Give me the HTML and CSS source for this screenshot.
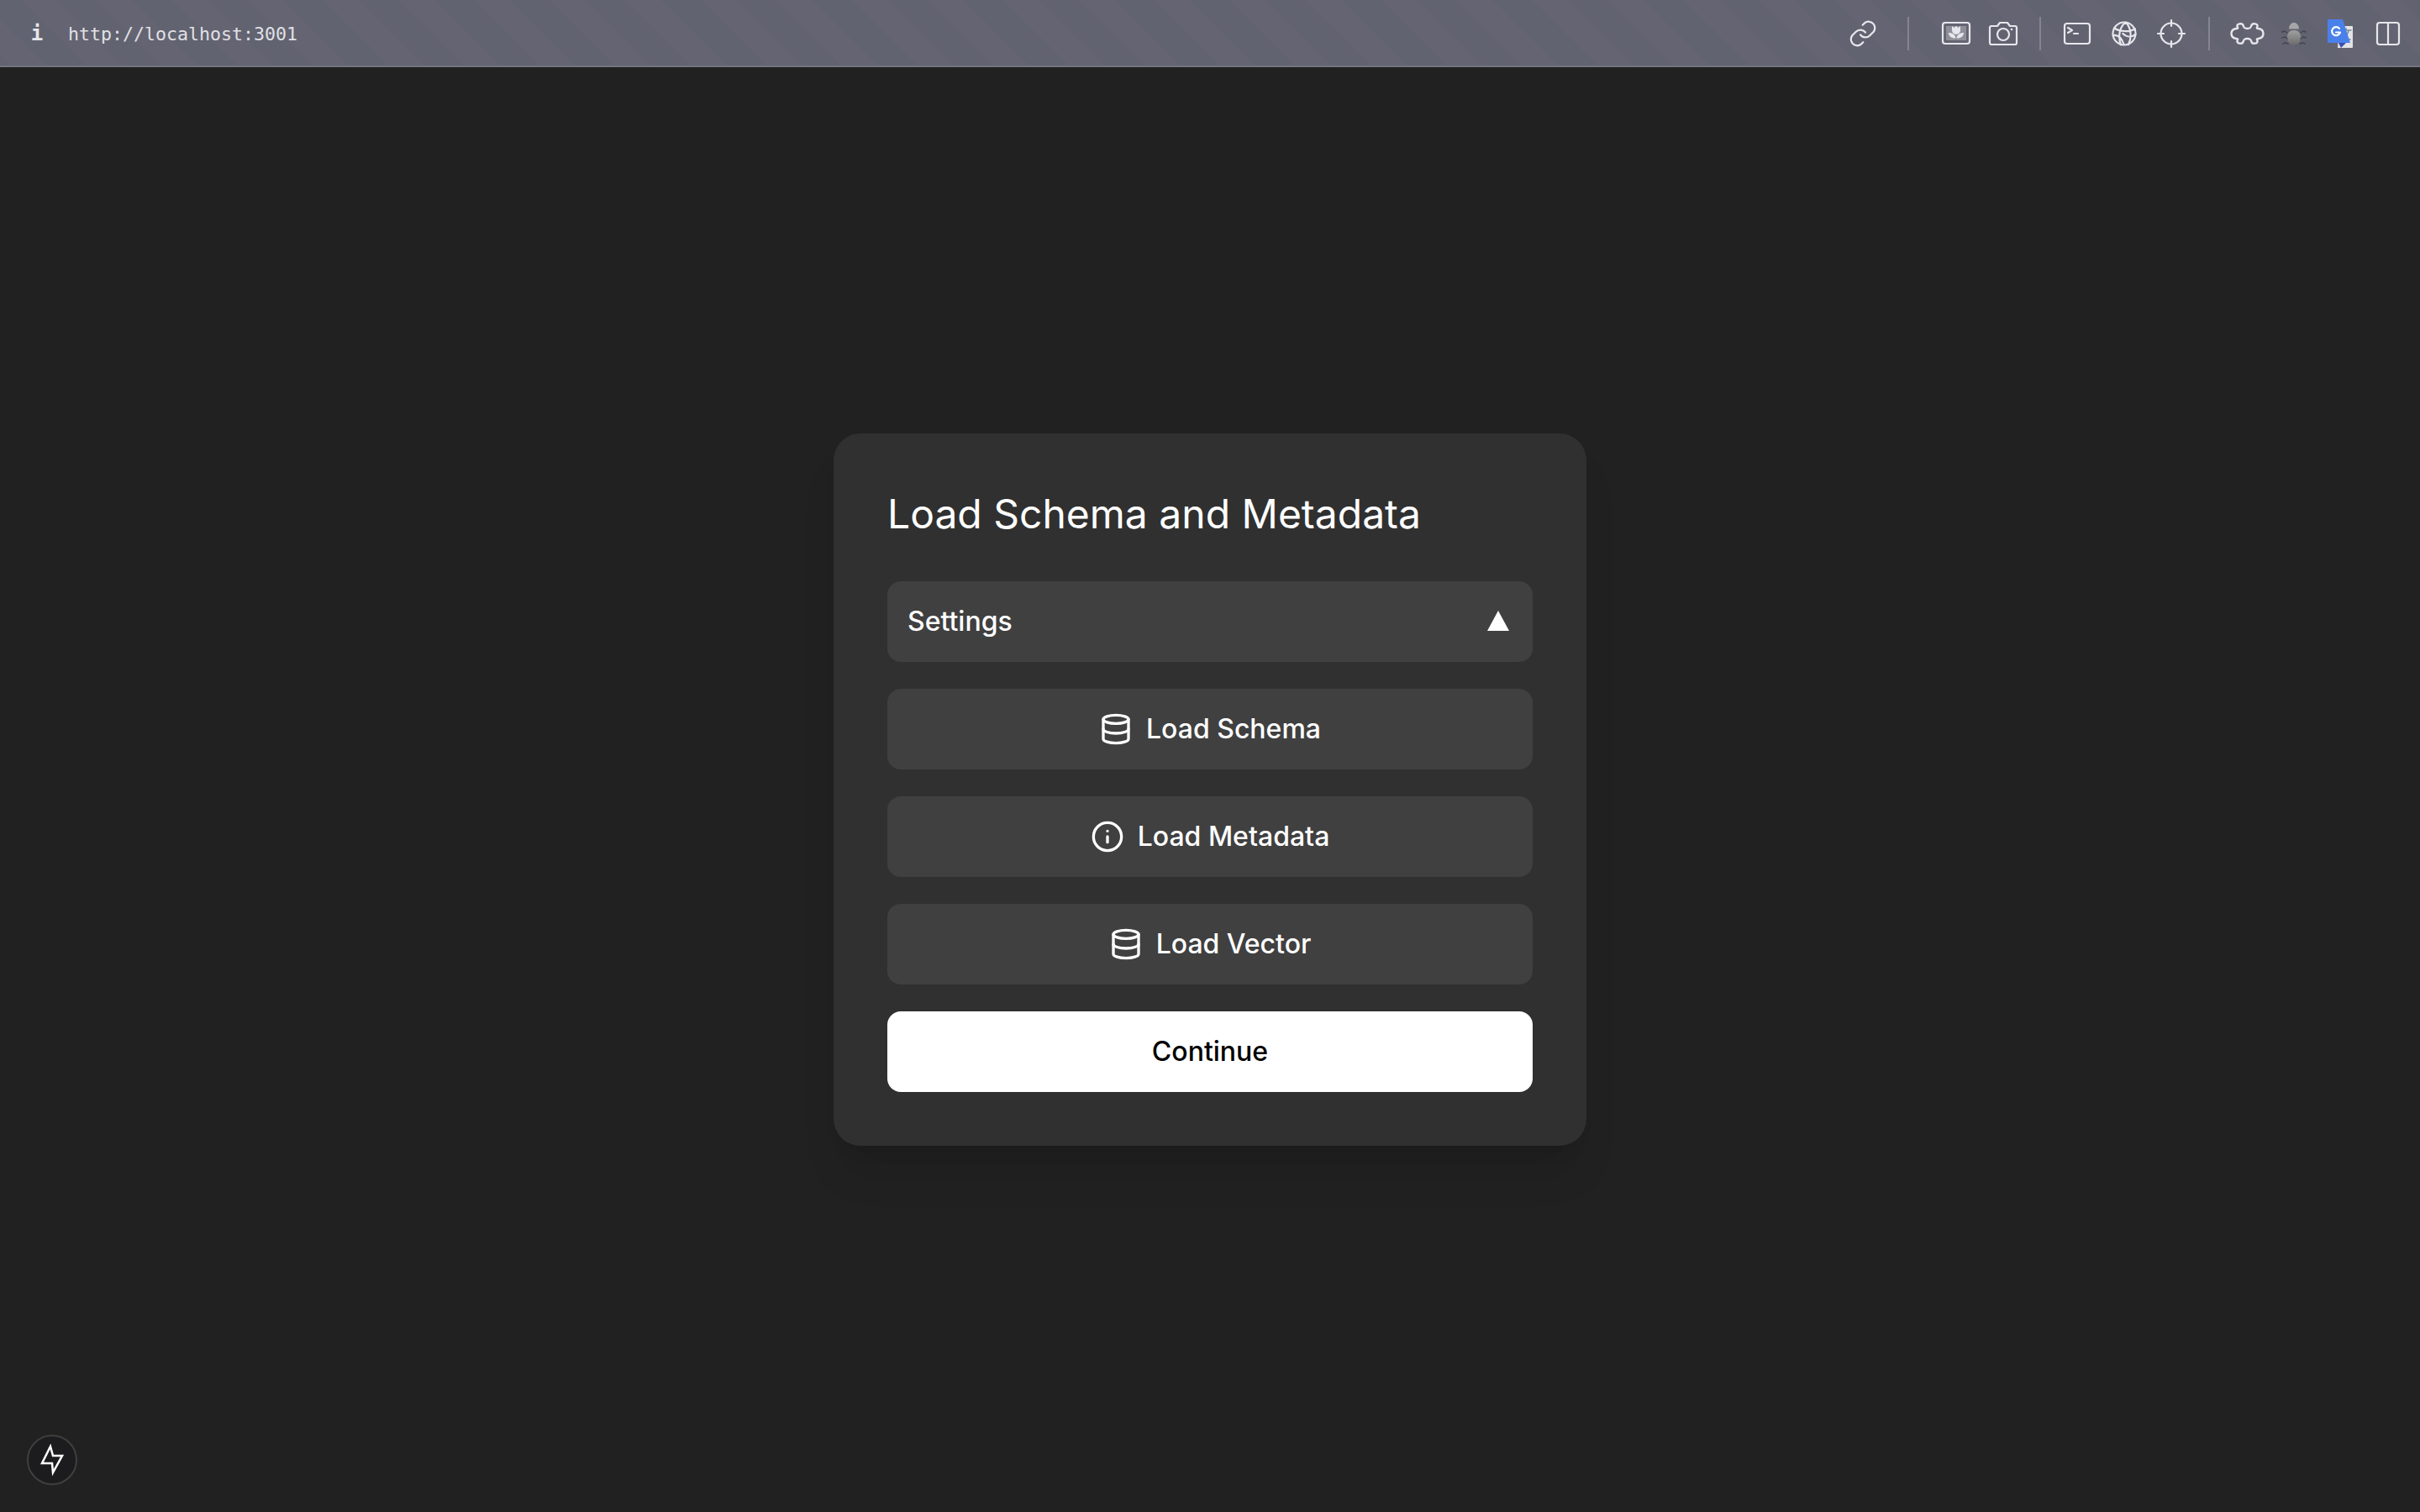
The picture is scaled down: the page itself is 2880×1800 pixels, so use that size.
FILE: index.html
```html
<!DOCTYPE html>
<html lang="en">
<head>
    <meta charset="UTF-8">
    <meta name="viewport" content="width=device-width, initial-scale=1.0">
    <title>Load Schema and Metadata</title>
    <link rel="stylesheet" href="styles.css">
</head>
<body>
    <header class="toolbar">
        <span class="info-glyph">i</span>
        <span class="url">http://localhost:3001</span>
        <div class="tools">
            <span class="tool">
                <svg class="link" viewBox="0 0 24 24"><path d="M10 13a5 5 0 0 0 7.500.5l3-3a5 5 0 0 0-7-7l-1.700 1.700"/><path d="M14 11a5 5 0 0 0-7.500-.5l-3 3a5 5 0 0 0 7 7l1.700-1.700"/></svg>
            </span>
            <span class="sep sep-wide"></span>
            <span class="tool">
                <svg viewBox="0 0 36 36"><rect x="2" y="5" width="32" height="25" rx="3"/><path class="fill-soft" d="M6 9h24v17H6z"/><path class="fill-solid" d="M13 9l2.500 2 2.500-2 2.500 2 2.500-2v5a5 5 0 0 1-10 0zM9 17c4 0 8 2 8.500 6.500C13 24 9 21 9 17zM27 17c-4 0-8 2-8.500 6.500C23 24 27 21 27 17z"/></svg>
            </span>
            <span class="tool">
                <svg viewBox="0 0 36 36"><path d="M4 9h7l3-4h9l3 4h6a2 2 0 0 1 2 2v18a2 2 0 0 1-2 2H4a2 2 0 0 1-2-2V11a2 2 0 0 1 2-2z"/><circle cx="18" cy="19" r="7"/><circle class="fill-solid" cx="28" cy="13" r="1.300"/></svg>
            </span>
            <span class="sep sep-mid"></span>
            <span class="tool">
                <svg viewBox="0 0 36 36"><rect x="3" y="6" width="30" height="24" rx="3"/><path d="M7 11l5 3-5 3M14 18h5"/></svg>
            </span>
            <span class="tool">
                <svg viewBox="0 0 36 36"><circle cx="18" cy="18" r="13.500"/><path d="M20 4.600c-7 4-10 16-6 26.800M20 4.600c5 5 8 16 3 26.500M6 11.500c6 4 18 5 25 1M4.600 20c6-1 10 2 13 11M31.400 19c-4 3-10 4-15-1"/></svg>
            </span>
            <span class="tool">
                <svg viewBox="0 0 36 36"><circle cx="18" cy="18" r="12.500"/><path d="M18 2v7M18 27v7M2 18h7M27 18h7"/></svg>
            </span>
            <span class="sep"></span>
            <span class="tool">
                <svg class="puzzle" viewBox="-1.500 -1 41 28"><path d="M6 7C8 7 8 6 7 4.500C6 1 13 0 14 3C14.500 5 15 7 19 7C23 7 23.500 5 24 3C25 0 32 1 31 4.500C30 6 30 7 32 7C36 7.500 38 10 38 13C38 16 36 18.500 32 19C30 19 30 20 31 21.500C32 25 25 26 24 23C23.500 21 23 19 19 19C15 19 14.500 21 14 23C13 26 6 25 7 21.500C8 20 8 19 6 19C2 18.500 0 16 0 13C0 10 2 7.500 6 7Z"/></svg>
            </span>
            <span class="tool">
                <svg class="bug" viewBox="0 0 36 36">
                    <defs><linearGradient id="bug-body" x1="0" y1="0" x2="0" y2="1"><stop offset="0" stop-color="#a0a0a0"/><stop offset="1" stop-color="#6c6c6c"/></linearGradient></defs>
                    <path d="M12 12.500c0-10 12-10 12 0z" fill="#a6a6a6"/>
                    <path d="M18 14c5 0 8 3 8 8 0 6-3 9.500-8 9.500s-8-3.500-8-9.500c0-5 3-8 8-8z" fill="url(#bug-body)"/>
                    <path d="M4 16l3-1 3 2M32 16l-3-1-3 2M4 23l3-1 3 2M32 23l-3-1-3 2M5 30l3-1 3 1M31 30l-3-1-3 1" fill="none" stroke="#46464c" stroke-width="1.500"/>
                </svg>
            </span>
            <span class="tool">
                <svg class="translate" viewBox="0 0 36 36"><path d="M16 9h15a1 1 0 0 1 1 1v24a1 1 0 0 1-1 1H14z" fill="#e4e4e4"/><path d="M18 14h12M24 12v2M27 14c-1 6-5 10-8 11M20 17c1 4 5 7 9 8" fill="none" stroke="#7b8f9b" stroke-width="1.600"/><path d="M2 2a1 1 0 0 1 1-1h17l9 28H3a1 1 0 0 1-1-1z" fill="#4a80ea"/><path d="M15 29l9 0-6 6z" fill="#3a4fb5"/><path d="M16 12a5 5 0 1 0 1 4.500h-5" fill="none" stroke="#fff" stroke-width="2.200"/></svg>
            </span>
            <span class="tool">
                <svg viewBox="0 0 36 36"><rect x="5" y="5" width="26" height="26" rx="3"/><path d="M18 5v26"/></svg>
            </span>
        </div>
    </header>

    <main class="stage">
        <section class="card">
            <h1 class="card-title">Load Schema and Metadata</h1>
            <button class="row row-settings">
                <span>Settings</span>
                <span class="caret"></span>
            </button>
            <button class="row">
                <svg class="row-icon" viewBox="0 0 24 24"><ellipse cx="12" cy="5" rx="9" ry="3"/><path d="M3 5v14c0 1.660 4 3 9 3s9-1.340 9-3V5"/><path d="M3 12c0 1.660 4 3 9 3s9-1.340 9-3"/></svg>
                <span class="row-label">Load Schema</span>
            </button>
            <button class="row">
                <svg class="row-icon" viewBox="0 0 24 24"><circle cx="12" cy="12" r="10"/><path d="M12 16v-4M12 8h.01"/></svg>
                <span class="row-label">Load Metadata</span>
            </button>
            <button class="row">
                <svg class="row-icon" viewBox="0 0 24 24"><ellipse cx="12" cy="5" rx="9" ry="3"/><path d="M3 5v14c0 1.660 4 3 9 3s9-1.340 9-3V5"/><path d="M3 12c0 1.660 4 3 9 3s9-1.340 9-3"/></svg>
                <span class="row-label">Load Vector</span>
            </button>
            <button class="row row-primary"><span class="row-label">Continue</span></button>
        </section>
    </main>

    <div class="dev-badge">
        <svg viewBox="2 2 56 56"><path d="M28 14L31 25H42L31 45L30 34H18Z"/></svg>
    </div>
</body>
</html>
```
FILE: styles.css
```css
* {
    box-sizing: border-box;
}

html, body {
    height: 100%;
}

body {
    margin: 0;
    display: flex;
    flex-direction: column;
    background-color: #212121;
    color: #fff;
    font-family: Inter, "Noto Sans", sans-serif;
}

.toolbar {
    height: 80px;
    flex: none;
    display: flex;
    align-items: center;
    padding: 2px 10px 0 0;
    border-bottom: 2px solid #74747f;
    background-color: #62626f;
    background-image: repeating-linear-gradient(45deg, #616370 0, #616370 8px, #656472 10px, #656472 38px, #616370 40px, #616370 63.600px);
}

.info-glyph {
    width: 26px;
    margin-left: 31px;
    margin-right: 24px;
    text-align: center;
    font-family: "DejaVu Sans Mono", monospace;
    font-size: 24px;
    font-weight: bold;
    color: #e6e6ec;
}

.url {
    font-family: "DejaVu Sans Mono", monospace;
    font-size: 21.600px;
    color: #e0e0e6;
}

.tools {
    margin-left: auto;
    display: flex;
    align-items: center;
}

.tool {
    width: 56px;
    height: 40px;
    display: flex;
    align-items: center;
    justify-content: center;
}

.tool svg {
    width: 36px;
    height: 36px;
    overflow: visible;
    fill: none;
    stroke: #e6e6ec;
    stroke-width: 2.200;
    stroke-linecap: round;
    stroke-linejoin: round;
}

.tool svg.link {
    stroke-width: 1.500;
}

.tool svg.puzzle {
    width: 41px;
    height: 28px;
    flex: none;
    stroke-width: 2.400;
}

.tool svg.bug, .tool svg.translate {
    stroke: none;
}

.tool .fill-soft {
    stroke: none;
    fill: #8f8f9a;
}

.tool .fill-solid {
    stroke: none;
    fill: #e6e6ec;
}

.sep {
    width: 2px;
    height: 40px;
    margin: 0 16px;
    background-color: #85858f;
}

.sep-mid {
    margin: 0 15px;
}

.sep-wide {
    margin: 0 28px 0 25px;
}

.stage {
    flex: 1;
    display: flex;
    align-items: center;
    justify-content: center;
}

.card {
    width: 896px;
    padding: 64px;
    display: flex;
    flex-direction: column;
    gap: 32px;
    background-color: #303030;
    border-radius: 32px;
    box-shadow: 0 40px 50px -10px rgba(0, 0, 0, 0.1), 0 16px 20px -12px rgba(0, 0, 0, 0.1);
}

.card-title {
    margin: 0 0 16px;
    font-size: 48px;
    line-height: 64px;
    font-weight: 400;
}

.row {
    height: 96px;
    display: flex;
    align-items: center;
    justify-content: center;
    gap: 16px;
    padding: 0 24px;
    border: none;
    border-radius: 16px;
    background-color: #404040;
    color: #fff;
    font-family: inherit;
    font-size: 32px;
    font-weight: 500;
}

.row-label {
    padding-bottom: 2px;
}

.row-settings {
    justify-content: space-between;
    padding-bottom: 2px;
}

.row-primary {
    background-color: #fff;
    color: #000;
}

.row-icon {
    width: 40px;
    height: 40px;
    fill: none;
    stroke: currentColor;
    stroke-width: 2;
    stroke-linecap: round;
    stroke-linejoin: round;
}

.caret {
    width: 0;
    height: 0;
    margin-right: 4px;
    border-left: 13px solid transparent;
    border-right: 13px solid transparent;
    border-bottom: 24px solid #fff;
}

.dev-badge {
    position: fixed;
    left: 32px;
    bottom: 32px;
    width: 60px;
    height: 60px;
    display: flex;
    align-items: center;
    justify-content: center;
    border: 2px solid #3f3f3f;
    border-radius: 50%;
    background-color: #1c1c1e;
}

.dev-badge svg {
    width: 56px;
    height: 56px;
    fill: none;
    stroke: #fff;
    stroke-width: 2.500;
}
```
